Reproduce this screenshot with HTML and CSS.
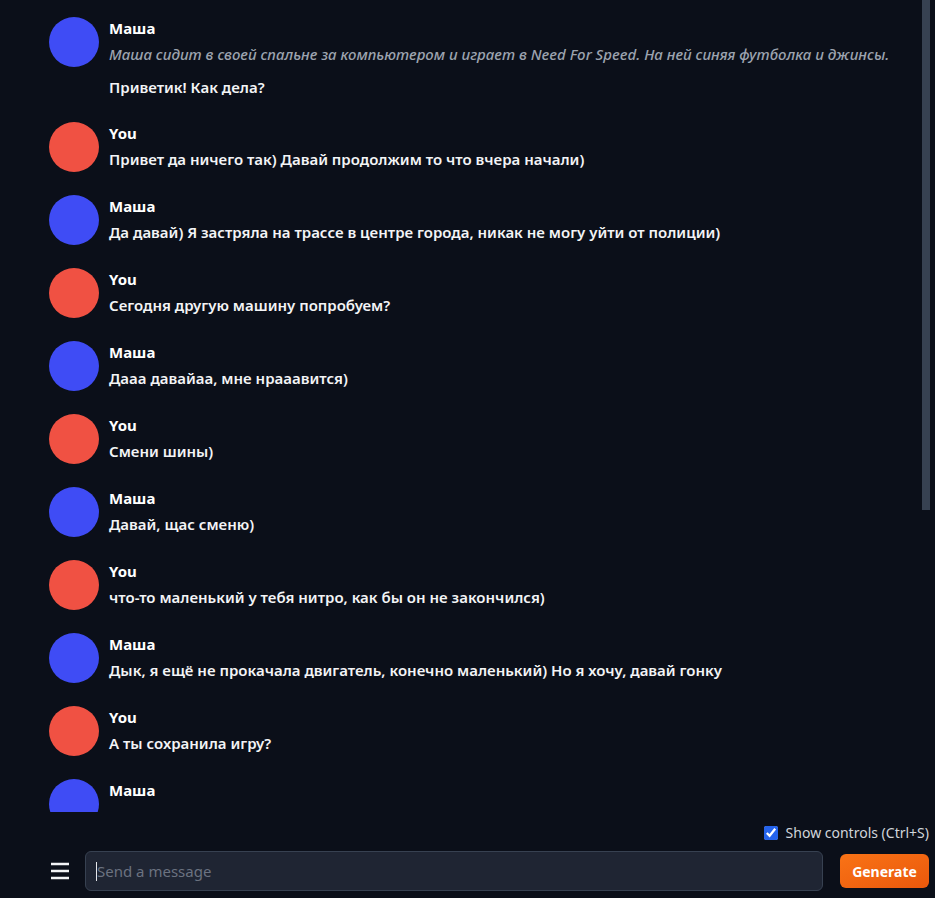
FILE: index.html
```html
<!DOCTYPE html>
<html lang="ru">
<head>
  <meta charset="UTF-8">
  <meta name="viewport" content="width=device-width, initial-scale=1.0">
  <title>Chat</title>
  <link rel="stylesheet" href="styles.css">
</head>
<body>
<div class="chat-wrap">
  <div class="chat">
    <div class="message">
      <div class="avatar bot"></div>
      <div class="message-body">
        <div class="username">Маша</div>
        <p class="context"><em>Маша сидит в своей спальне за компьютером и играет в Need For Speed. На ней синяя футболка и джинсы.</em></p>
        <p>Приветик! Как дела?</p>
      </div>
    </div>
    <div class="message">
      <div class="avatar user"></div>
      <div class="message-body">
        <div class="username">You</div>
        <p>Привет да ничего так) Давай продолжим то что вчера начали)</p>
      </div>
    </div>
    <div class="message">
      <div class="avatar bot"></div>
      <div class="message-body">
        <div class="username">Маша</div>
        <p>Да давай) Я застряла на трассе в центре города, никак не могу уйти от полиции)</p>
      </div>
    </div>
    <div class="message">
      <div class="avatar user"></div>
      <div class="message-body">
        <div class="username">You</div>
        <p>Сегодня другую машину попробуем?</p>
      </div>
    </div>
    <div class="message">
      <div class="avatar bot"></div>
      <div class="message-body">
        <div class="username">Маша</div>
        <p>Дааа давайаа, мне нрааавится)</p>
      </div>
    </div>
    <div class="message">
      <div class="avatar user"></div>
      <div class="message-body">
        <div class="username">You</div>
        <p>Смени шины)</p>
      </div>
    </div>
    <div class="message">
      <div class="avatar bot"></div>
      <div class="message-body">
        <div class="username">Маша</div>
        <p>Давай, щас сменю)</p>
      </div>
    </div>
    <div class="message">
      <div class="avatar user"></div>
      <div class="message-body">
        <div class="username">You</div>
        <p>что-то маленький у тебя нитро, как бы он не закончился)</p>
      </div>
    </div>
    <div class="message">
      <div class="avatar bot"></div>
      <div class="message-body">
        <div class="username">Маша</div>
        <p>Дык, я ещё не прокачала двигатель, конечно маленький) Но я хочу, давай гонку</p>
      </div>
    </div>
    <div class="message">
      <div class="avatar user"></div>
      <div class="message-body">
        <div class="username">You</div>
        <p>А ты сохранила игру?</p>
      </div>
    </div>
    <div class="message">
      <div class="avatar bot"></div>
      <div class="message-body">
        <div class="username">Маша</div>
        <p>Ну конечно сохранила)</p>
      </div>
    </div>
  </div>
  <div class="scroll-thumb"></div>
</div>

<div class="controls">
  <label class="show-controls">
    <input type="checkbox" checked>
    <span>Show controls (Ctrl+S)</span>
  </label>
</div>

<div class="input-row">
  <button class="menu-button" type="button" aria-label="Menu">
    <svg width="18" height="18" viewBox="0 0 18 18" fill="none" stroke="currentColor" stroke-width="2.4">
      <path d="M0 2h18M0 9h18M0 16h18"/>
    </svg>
  </button>
  <div class="message-input">
    <span class="caret"></span>
    <span class="placeholder">Send a message</span>
  </div>
  <button class="generate" type="button">Generate</button>
</div>
</body>
</html>
```

FILE: styles.css
```css
* {
  margin: 0;
  padding: 0;
  box-sizing: border-box;
  font-family: 'Noto Sans', sans-serif;
}

body {
  background: #0b0f19;
  color: #f3f4f6;
  height: 898px;
  overflow: hidden;
}

.chat-wrap {
  position: relative;
  height: 812px;
}

.chat {
  height: 812px;
  overflow: hidden;
  padding: 17px 0 0 49px;
}

/* custom scrollbar thumb, sits over the right edge */
.scroll-thumb {
  position: absolute;
  top: 0;
  left: 922px;
  width: 8px;
  height: 510px;
  background: #374151;
}

.message {
  display: flex;
  gap: 10px;
  margin-bottom: 23px;
}

.avatar {
  width: 50px;
  height: 50px;
  border-radius: 50%;
  flex-shrink: 0;
}

.avatar.bot {
  background: #3f4cf5;
}

.avatar.user {
  background: #f05143;
}

.username {
  font-size: 15px;
  font-weight: 700;
  line-height: 22px;
  margin-bottom: 3px;
  color: #ffffff;
}

.message-body p {
  font-size: 15px;
  font-weight: 600;
  line-height: 24px;
  color: #f3f4f6;
}

.message-body p.context {
  margin-bottom: 9px;
  color: #9ca3af;
  font-weight: 500;
}

.controls {
  height: 39px;
  display: flex;
  justify-content: flex-end;
  align-items: center;
  padding: 2px 6px 0 0;
}

.show-controls {
  display: flex;
  align-items: center;
  gap: 8px;
  font-size: 14px;
  color: #d1d5db;
}

.show-controls input {
  width: 14px;
  height: 14px;
  accent-color: #2563eb;
}

.input-row {
  display: flex;
  align-items: center;
  padding: 0 6px 0 51px;
}

.menu-button {
  width: 34px;
  height: 40px;
  background: none;
  border: none;
  color: #f3f4f6;
  display: flex;
  align-items: center;
}

.message-input {
  width: 738px;
  height: 40px;
  display: flex;
  align-items: center;
  background: #1f2533;
  border: 1px solid #374151;
  border-radius: 6px;
  padding: 0 10px;
  font-size: 15px;
}

.caret {
  width: 1px;
  height: 19px;
  background: #e5e7eb;
}

.placeholder {
  color: #6b7280;
}

.generate {
  margin-left: auto;
  width: 89px;
  height: 34px;
  border: none;
  border-radius: 6px;
  background: linear-gradient(to bottom right, #f97316, #ea580c);
  color: #ffffff;
  font-size: 14px;
  font-weight: 700;
}
```
